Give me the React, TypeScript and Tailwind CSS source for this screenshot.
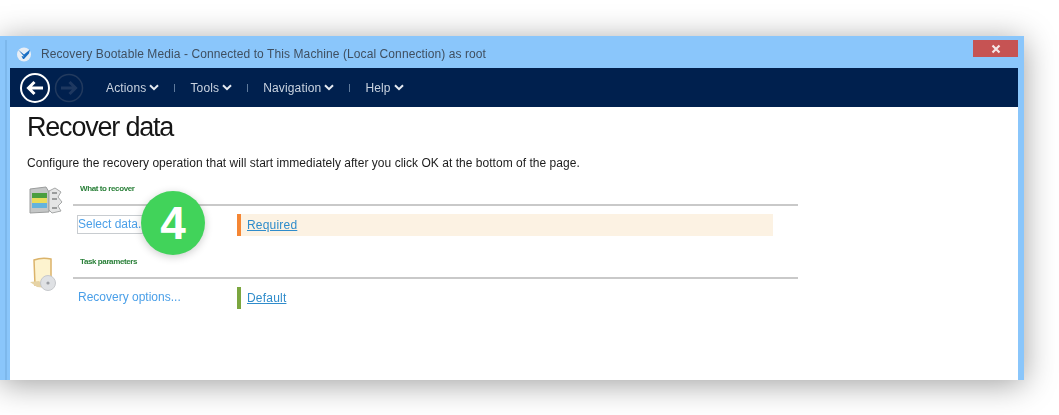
const NavMenu = ({ label }: { label: string }) => (
  <div className="flex items-center gap-[3px] text-[12px] tracking-[0.15px] text-[#c9d3e0]">
    <span>{label}</span>
    <svg width="10" height="7" viewBox="0 0 10 7" fill="none" stroke="#e6ebf2" strokeWidth="2">
      <path d="M1 1.2 L5 5.2 L9 1.2" />
    </svg>
  </div>
)

const Sep = () => <div className="mx-[15px] mt-[1px] h-[8px] w-px bg-[#5f7a9c]" />

const DataIcon = () => (
  <svg width="36" height="32" viewBox="0 0 36 32">
    <path d="M3 5 L19 3 L22 8 L22 28 L3 29 Z" fill="#c4c6c6" stroke="#9a9c9c" />
    <rect x="5" y="9" width="15" height="5" fill="#4b9e3f" />
    <rect x="5" y="14" width="15" height="5" fill="#e9dc5c" />
    <rect x="5" y="19" width="15" height="5" fill="#63b3dd" />
    <path d="M22 7 L28 4 L34 8 L31 13 L35 18 L31 22 L34 27 L25 29 L22 26 Z" fill="#e4e5e5" stroke="#a5a7a7" />
    <path d="M25 9 h5 M25 15 h5 M25 24 h5" stroke="#9a9c9c" strokeWidth="2" />
  </svg>
)

const TaskIcon = () => (
  <svg width="36" height="34" viewBox="0 0 36 34">
    <path d="M7 3 Q15 0 24 2 L24 22 L8 28 Z" fill="#fdf3cf" stroke="#dbb36a" strokeWidth="1.5" />
    <path d="M3 25 L10 30 L20 31 L12 24 Z" fill="#e6d3a5" />
    <circle cx="21" cy="26" r="7.5" fill="#dfe1e4" stroke="#c6c8cc" />
    <circle cx="21" cy="26" r="1.6" fill="#9a9da3" />
  </svg>
)

const Section = ({ icon, title, link, status, bar, tint, focused }: {
  icon: React.ReactNode
  title: string
  link: string
  status: string
  bar: string
  tint: string
  focused?: boolean
}) => (
  <div className="flex">
    <div className="w-[46px] shrink-0 pt-[5px]">{icon}</div>
    <div className="w-[725px]">
      <div className="h-[27px] border-b-2 border-[#c9c9c9] pl-[7px] pt-[4px] text-[8px] font-bold tracking-[-0.4px] text-[#2a8039]">
        {title}
      </div>
      <div className="flex h-[38px] items-center pl-[4px]">
        <div className="flex w-[160px] pb-[1px]">
          <span className={`h-[19px] whitespace-nowrap text-[12px] leading-[17px] text-[#4a9fe8] ${focused ? 'w-[66px] border border-[#c8ccd0]' : 'border border-transparent'}`}>
            {link}
          </span>
        </div>
        <div className={`flex h-[22px] w-[536px] items-center border-l-4 pl-[6px] ${bar} ${tint}`}>
          <a className="text-[12px] tracking-[0.2px] text-[#2f8ccb] underline">{status}</a>
        </div>
      </div>
    </div>
  </div>
)

export default function App() {
  return (
    <div className="relative h-[415px] w-[1059px] overflow-hidden bg-white pr-[35px] pt-[36px] font-['Liberation_Sans',sans-serif]">
      <div className="relative h-[344px] bg-[#8ac6fb] shadow-[0_4px_30px_rgba(0,0,0,0.38)]">
        <div className="absolute bottom-0 left-[5px] top-[4px] w-[2px] bg-[#7db8ec]" />
        <div className="flex h-[32px] items-center justify-between pl-[16px] pr-[6px] blur-[0.3px]">
          <div className="mt-[4px] flex items-center gap-[9px]">
            <svg width="16" height="15" viewBox="0 0 16 15">
              <circle cx="8" cy="7.5" r="7" fill="#e8eef5" />
              <path d="M2 2.5 L8 7.5 L14 2.5 L13 6.5 L8 12 L7 12 L5.5 9 L8 9.5 Z" fill="#1c6fc4" />
            </svg>
            <span className="text-[12px] tracking-[0.09px] text-[#3f4f60]">Recovery Bootable Media - Connected to This Machine (Local Connection) as root</span>
          </div>
          <div className="mb-[7px] flex h-[17px] w-[45px] items-center justify-center bg-[#c65353]">
            <svg width="10" height="10" viewBox="0 0 10 10" stroke="#f5e6e6" strokeWidth="2.2">
              <path d="M1.5 1.5 L8.5 8.5 M8.5 1.5 L1.5 8.5" />
            </svg>
          </div>
        </div>
        <div className="h-[312px] pl-[10px] pr-[6px]">
          <div className="flex h-full flex-col bg-white">
            <div className="flex h-[39px] shrink-0 items-center bg-[#00204e] pl-[9px] blur-[0.3px]">
              <svg width="32" height="32" viewBox="0 0 32 32" fill="none">
                <circle cx="16" cy="16" r="14" stroke="#ffffff" strokeWidth="2" />
                <path d="M24 16 H10 M15.5 10 L9.5 16 L15.5 22" stroke="#ffffff" strokeWidth="3" />
              </svg>
              <svg className="ml-[3px]" width="30" height="30" viewBox="0 0 30 30" fill="none">
                <circle cx="15" cy="15" r="13.5" stroke="#223a5e" strokeWidth="1.5" />
                <path d="M7 15 H21 M15.5 9 L21.5 15 L15.5 21" stroke="#1e3860" strokeWidth="3" />
              </svg>
              <div className="ml-[22px] flex items-center">
                <NavMenu label="Actions" />
                <Sep />
                <NavMenu label="Tools" />
                <Sep />
                <NavMenu label="Navigation" />
                <Sep />
                <NavMenu label="Help" />
              </div>
            </div>
            <div className="pl-[17px] blur-[0.3px]">
              <h1 className="mt-[2px] text-[27px] leading-[36px] tracking-[-1.2px] text-[#161616]">Recover data</h1>
              <p className="mt-[11px] text-[12px] leading-[15px] tracking-[0.03px] text-[#1c1c1c]">
                Configure the recovery operation that will start immediately after you click OK at the bottom of the page.
              </p>
              <div className="mt-[8px] flex flex-col gap-[8px]">
                <Section icon={<DataIcon />} title="What to recover" link="Select data..." status="Required" bar="border-[#f58634]" tint="bg-[#fcf2e3]" focused />
                <Section icon={<TaskIcon />} title="Task parameters" link="Recovery options..." status="Default" bar="border-[#7ba63f]" tint="bg-white" />
              </div>
            </div>
          </div>
        </div>
      </div>
      <div className="absolute left-[141px] top-[191px] flex h-[64px] w-[64px] items-center justify-center rounded-full bg-[#41d35a] text-[46px] font-bold text-white shadow-[0_2px_8px_rgba(0,0,0,0.2)]">
        4
      </div>
    </div>
  )
}
